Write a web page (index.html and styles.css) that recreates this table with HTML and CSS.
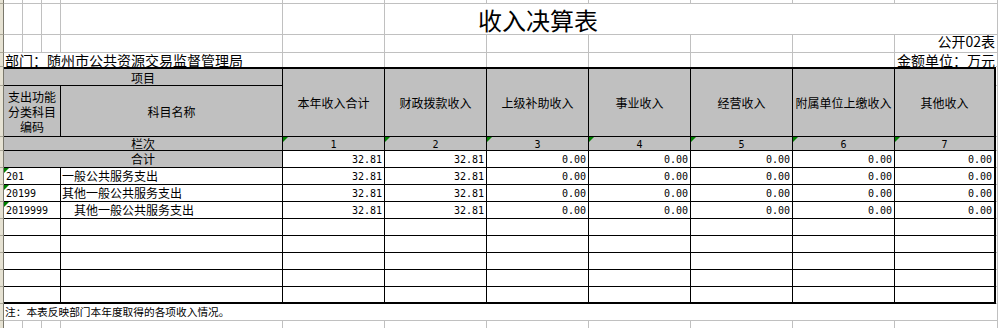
FILE: index.html
```html
<!DOCTYPE html>
<html lang="zh-CN">
<head>
<meta charset="utf-8">
<title>收入决算表</title>
<link rel="stylesheet" href="styles.css">
</head>
<body>
<div class="sheet">
  <!-- row 0 -->
  <div class="rh"></div>
  <div class="gl"></div><div class="gl"></div><div class="gl"></div><div class="gl"></div><div class="gl"></div>
  <div class="gl"></div><div class="gl"></div><div class="gl"></div><div class="gl"></div><div class="gl"></div>
  <div class="gb"></div>
  <div class="ed"></div>

  <!-- row 1 : title -->
  <div class="rh"></div>
  <div class="gl"></div><div class="gl"></div><div class="gl"></div><div class="gl"></div><div class="gl"></div>
  <div class="gb c3 title">收入决算表</div>
  <div class="gb c3"></div>
  <div class="ed"></div>

  <!-- row 2 -->
  <div class="rh"></div>
  <div class="gl"></div><div class="gl"></div><div class="gl"></div><div class="gl"></div><div class="gl"></div>
  <div class="gl"></div><div class="gl"></div><div class="gl"></div><div class="gl"></div><div class="gl"></div>
  <div class="gb form-no">公开02表</div>
  <div class="ed"></div>

  <!-- row 3 -->
  <div class="rh"></div>
  <div class="gr c4 dept">部门：随州市公共资源交易监督管理局</div>
  <div class="gr"></div><div class="gr"></div><div class="gr"></div><div class="gr"></div><div class="gr"></div><div class="gr"></div>
  <div class="unit">金额单位：万元</div>
  <div class="ed"></div>

  <!-- row 4 : header -->
  <div class="rh"></div>
  <div class="tc hd top c4">项目</div>
  <div class="tc hd top r2">本年收入合计</div>
  <div class="tc hd top r2">财政拨款收入</div>
  <div class="tc hd top r2">上级补助收入</div>
  <div class="tc hd top r2">事业收入</div>
  <div class="tc hd top r2">经营收入</div>
  <div class="tc hd top r2">附属单位上缴收入</div>
  <div class="tc hd top r2 rgt">其他收入</div>
  <div class="ed"></div>

  <!-- row 5 -->
  <div class="rh"></div>
  <div class="tc hd c3 multi"><span class="ml">支出功能</span><span class="ml">分类科目</span><span class="ml">编码</span></div>
  <div class="tc hd">科目名称</div>
  <div class="ed"></div>

  <!-- row 6 : 栏次 -->
  <div class="rh"></div>
  <div class="tc hd c4 lc">栏次</div>
  <div class="tc hd idx"><i class="tri"></i>1</div>
  <div class="tc hd idx"><i class="tri"></i>2</div>
  <div class="tc hd idx"><i class="tri"></i>3</div>
  <div class="tc hd idx"><i class="tri"></i>4</div>
  <div class="tc hd idx"><i class="tri"></i>5</div>
  <div class="tc hd idx"><i class="tri"></i>6</div>
  <div class="tc hd idx rgt"><i class="tri"></i>7</div>
  <div class="ed"></div>

  <!-- row 7 : 合计 -->
  <div class="rh"></div>
  <div class="tc hd c4 total">合计</div>
  <div class="tc num">32.81</div>
  <div class="tc num">32.81</div>
  <div class="tc num">0.00</div>
  <div class="tc num">0.00</div>
  <div class="tc num">0.00</div>
  <div class="tc num">0.00</div>
  <div class="tc num rgt">0.00</div>
  <div class="ed"></div>

  <!-- row 8 -->
  <div class="rh"></div>
  <div class="tc c3 code"><i class="tri"></i>201</div>
  <div class="tc name">一般公共服务支出</div>
  <div class="tc num">32.81</div>
  <div class="tc num">32.81</div>
  <div class="tc num">0.00</div>
  <div class="tc num">0.00</div>
  <div class="tc num">0.00</div>
  <div class="tc num">0.00</div>
  <div class="tc num rgt">0.00</div>
  <div class="ed"></div>

  <!-- row 9 -->
  <div class="rh"></div>
  <div class="tc c3 code"><i class="tri"></i>20199</div>
  <div class="tc name">其他一般公共服务支出</div>
  <div class="tc num">32.81</div>
  <div class="tc num">32.81</div>
  <div class="tc num">0.00</div>
  <div class="tc num">0.00</div>
  <div class="tc num">0.00</div>
  <div class="tc num">0.00</div>
  <div class="tc num rgt">0.00</div>
  <div class="ed"></div>

  <!-- row 10 -->
  <div class="rh"></div>
  <div class="tc c3 code"><i class="tri"></i>2019999</div>
  <div class="tc name indent">其他一般公共服务支出</div>
  <div class="tc num">32.81</div>
  <div class="tc num">32.81</div>
  <div class="tc num">0.00</div>
  <div class="tc num">0.00</div>
  <div class="tc num">0.00</div>
  <div class="tc num">0.00</div>
  <div class="tc num rgt">0.00</div>
  <div class="ed"></div>

  <!-- rows 11-14 : empty -->
  <div class="rh"></div>
  <div class="tc c3"></div><div class="tc"></div>
  <div class="tc"></div><div class="tc"></div><div class="tc"></div><div class="tc"></div><div class="tc"></div><div class="tc"></div><div class="tc rgt"></div>
  <div class="ed"></div>

  <div class="rh"></div>
  <div class="tc c3"></div><div class="tc"></div>
  <div class="tc"></div><div class="tc"></div><div class="tc"></div><div class="tc"></div><div class="tc"></div><div class="tc"></div><div class="tc rgt"></div>
  <div class="ed"></div>

  <div class="rh"></div>
  <div class="tc c3"></div><div class="tc"></div>
  <div class="tc"></div><div class="tc"></div><div class="tc"></div><div class="tc"></div><div class="tc"></div><div class="tc"></div><div class="tc rgt"></div>
  <div class="ed"></div>

  <div class="rh"></div>
  <div class="tc c3"></div><div class="tc"></div>
  <div class="tc"></div><div class="tc"></div><div class="tc"></div><div class="tc"></div><div class="tc"></div><div class="tc"></div><div class="tc rgt"></div>
  <div class="ed"></div>

  <!-- row 15 : last table row -->
  <div class="rh"></div>
  <div class="tc btm c3"></div><div class="tc btm"></div>
  <div class="tc btm"></div><div class="tc btm"></div><div class="tc btm"></div><div class="tc btm"></div><div class="tc btm"></div><div class="tc btm"></div><div class="tc btm rgt"></div>
  <div class="ed"></div>

  <!-- row 16 : note -->
  <div class="rh"></div>
  <div class="gb c11 note">注：本表反映部门本年度取得的各项收入情况。</div>
  <div class="ed"></div>

  <!-- row 17 -->
  <div class="rh"></div>
  <div class="gr"></div><div class="gr"></div><div class="gr"></div><div class="gr"></div><div class="gr"></div>
  <div class="gr"></div><div class="gr"></div><div class="gr"></div><div class="gr"></div><div class="gr"></div>
  <div></div>
  <div class="ed"></div>
</div>
</body>
</html>
```

FILE: styles.css
```css
html, body {
  margin: 0;
  padding: 0;
  background: #ffffff;
}

.sheet {
  display: grid;
  grid-template-columns: 4px 19px 19px 19px 222px repeat(6, 102px) 101px 2px;
  grid-template-rows: 4px 31px 18px 14px 19px 51px 14px 17px repeat(8, 17px) 17px 8px;
  width: 998px;
  font-family: "Noto Sans CJK SC", sans-serif;
  font-size: 12px;
  color: #000;
}

.sheet > div {
  box-sizing: border-box;
  min-width: 0;
  white-space: nowrap;
}

/* row header remnant on the left */
.rh {
  background: #e6e2d3;
  border-right: 1px solid #7a786c;
  border-bottom: 1px solid #aca899;
}

/* gridline cells */
.gl {
  border-right: 1px solid #c0c0c0;
  border-bottom: 1px solid #c0c0c0;
}
.gb {
  border-bottom: 1px solid #c0c0c0;
}
.gr {
  border-right: 1px solid #c0c0c0;
}
.ed {
  border-right: 1px solid #c0c0c0;
  border-bottom: 1px solid #c0c0c0;
}

/* spans */
.c3 { grid-column: span 3; }
.c4 { grid-column: span 4; }
.c11 { grid-column: span 11; }
.r2 { grid-row: span 2; }

/* top texts */
.title {
  font-size: 24px;
  line-height: 28px;
  padding-top: 2px;
  text-align: center;
}
.form-no {
  font-size: 14px;
  line-height: 13px;
  display: flex;
  justify-content: flex-end;
  padding-right: 1px;
}
.dept {
  font-size: 14px;
  line-height: 14px;
  padding-left: 1px;
}
.unit {
  font-size: 14px;
  line-height: 14px;
  display: flex;
  justify-content: flex-end;
  padding-right: 1px;
}

/* table cells */
.tc {
  position: relative;
  border-right: 1px solid #000;
  border-bottom: 1px solid #000;
  background: #fff;
}
.tc.hd {
  background: #c0c0c0;
  display: flex;
  align-items: center;
  justify-content: center;
  text-align: center;
}
.top { border-top: 2px solid #000; }
.rgt { border-right-width: 2px; }
.btm { border-bottom-width: 2px; }

.tc.hd.multi {
  flex-direction: column;
  gap: 2px;
}
.ml {
  display: block;
  line-height: 13px;
  height: 13px;
}

.tc.hd.lc {
  display: block;
  line-height: 13px;
}
.tc.hd.idx {
  display: block;
  font-family: "DejaVu Sans Mono", monospace;
  font-size: 10px;
  line-height: 10px;
  padding-top: 3px;
}
.tc.hd.total {
  display: block;
  line-height: 16px;
}

.num {
  font-family: "DejaVu Sans Mono", monospace;
  font-size: 10px;
  line-height: 14px;
  padding: 2px 2px 0 0;
  text-align: right;
}
.code {
  font-family: "DejaVu Sans Mono", monospace;
  font-size: 10px;
  line-height: 14px;
  padding: 2px 0 0 2px;
}
.name {
  line-height: 16px;
  padding-left: 1px;
}
.name.indent {
  padding-left: 13px;
}

.note {
  font-size: 10.7px;
  line-height: 16px;
  padding-left: 1px;
}

/* green error indicator */
.tri {
  position: absolute;
  left: 0;
  top: 0;
  width: 0;
  height: 0;
  border-top: 5px solid #008000;
  border-right: 5px solid transparent;
}
```
